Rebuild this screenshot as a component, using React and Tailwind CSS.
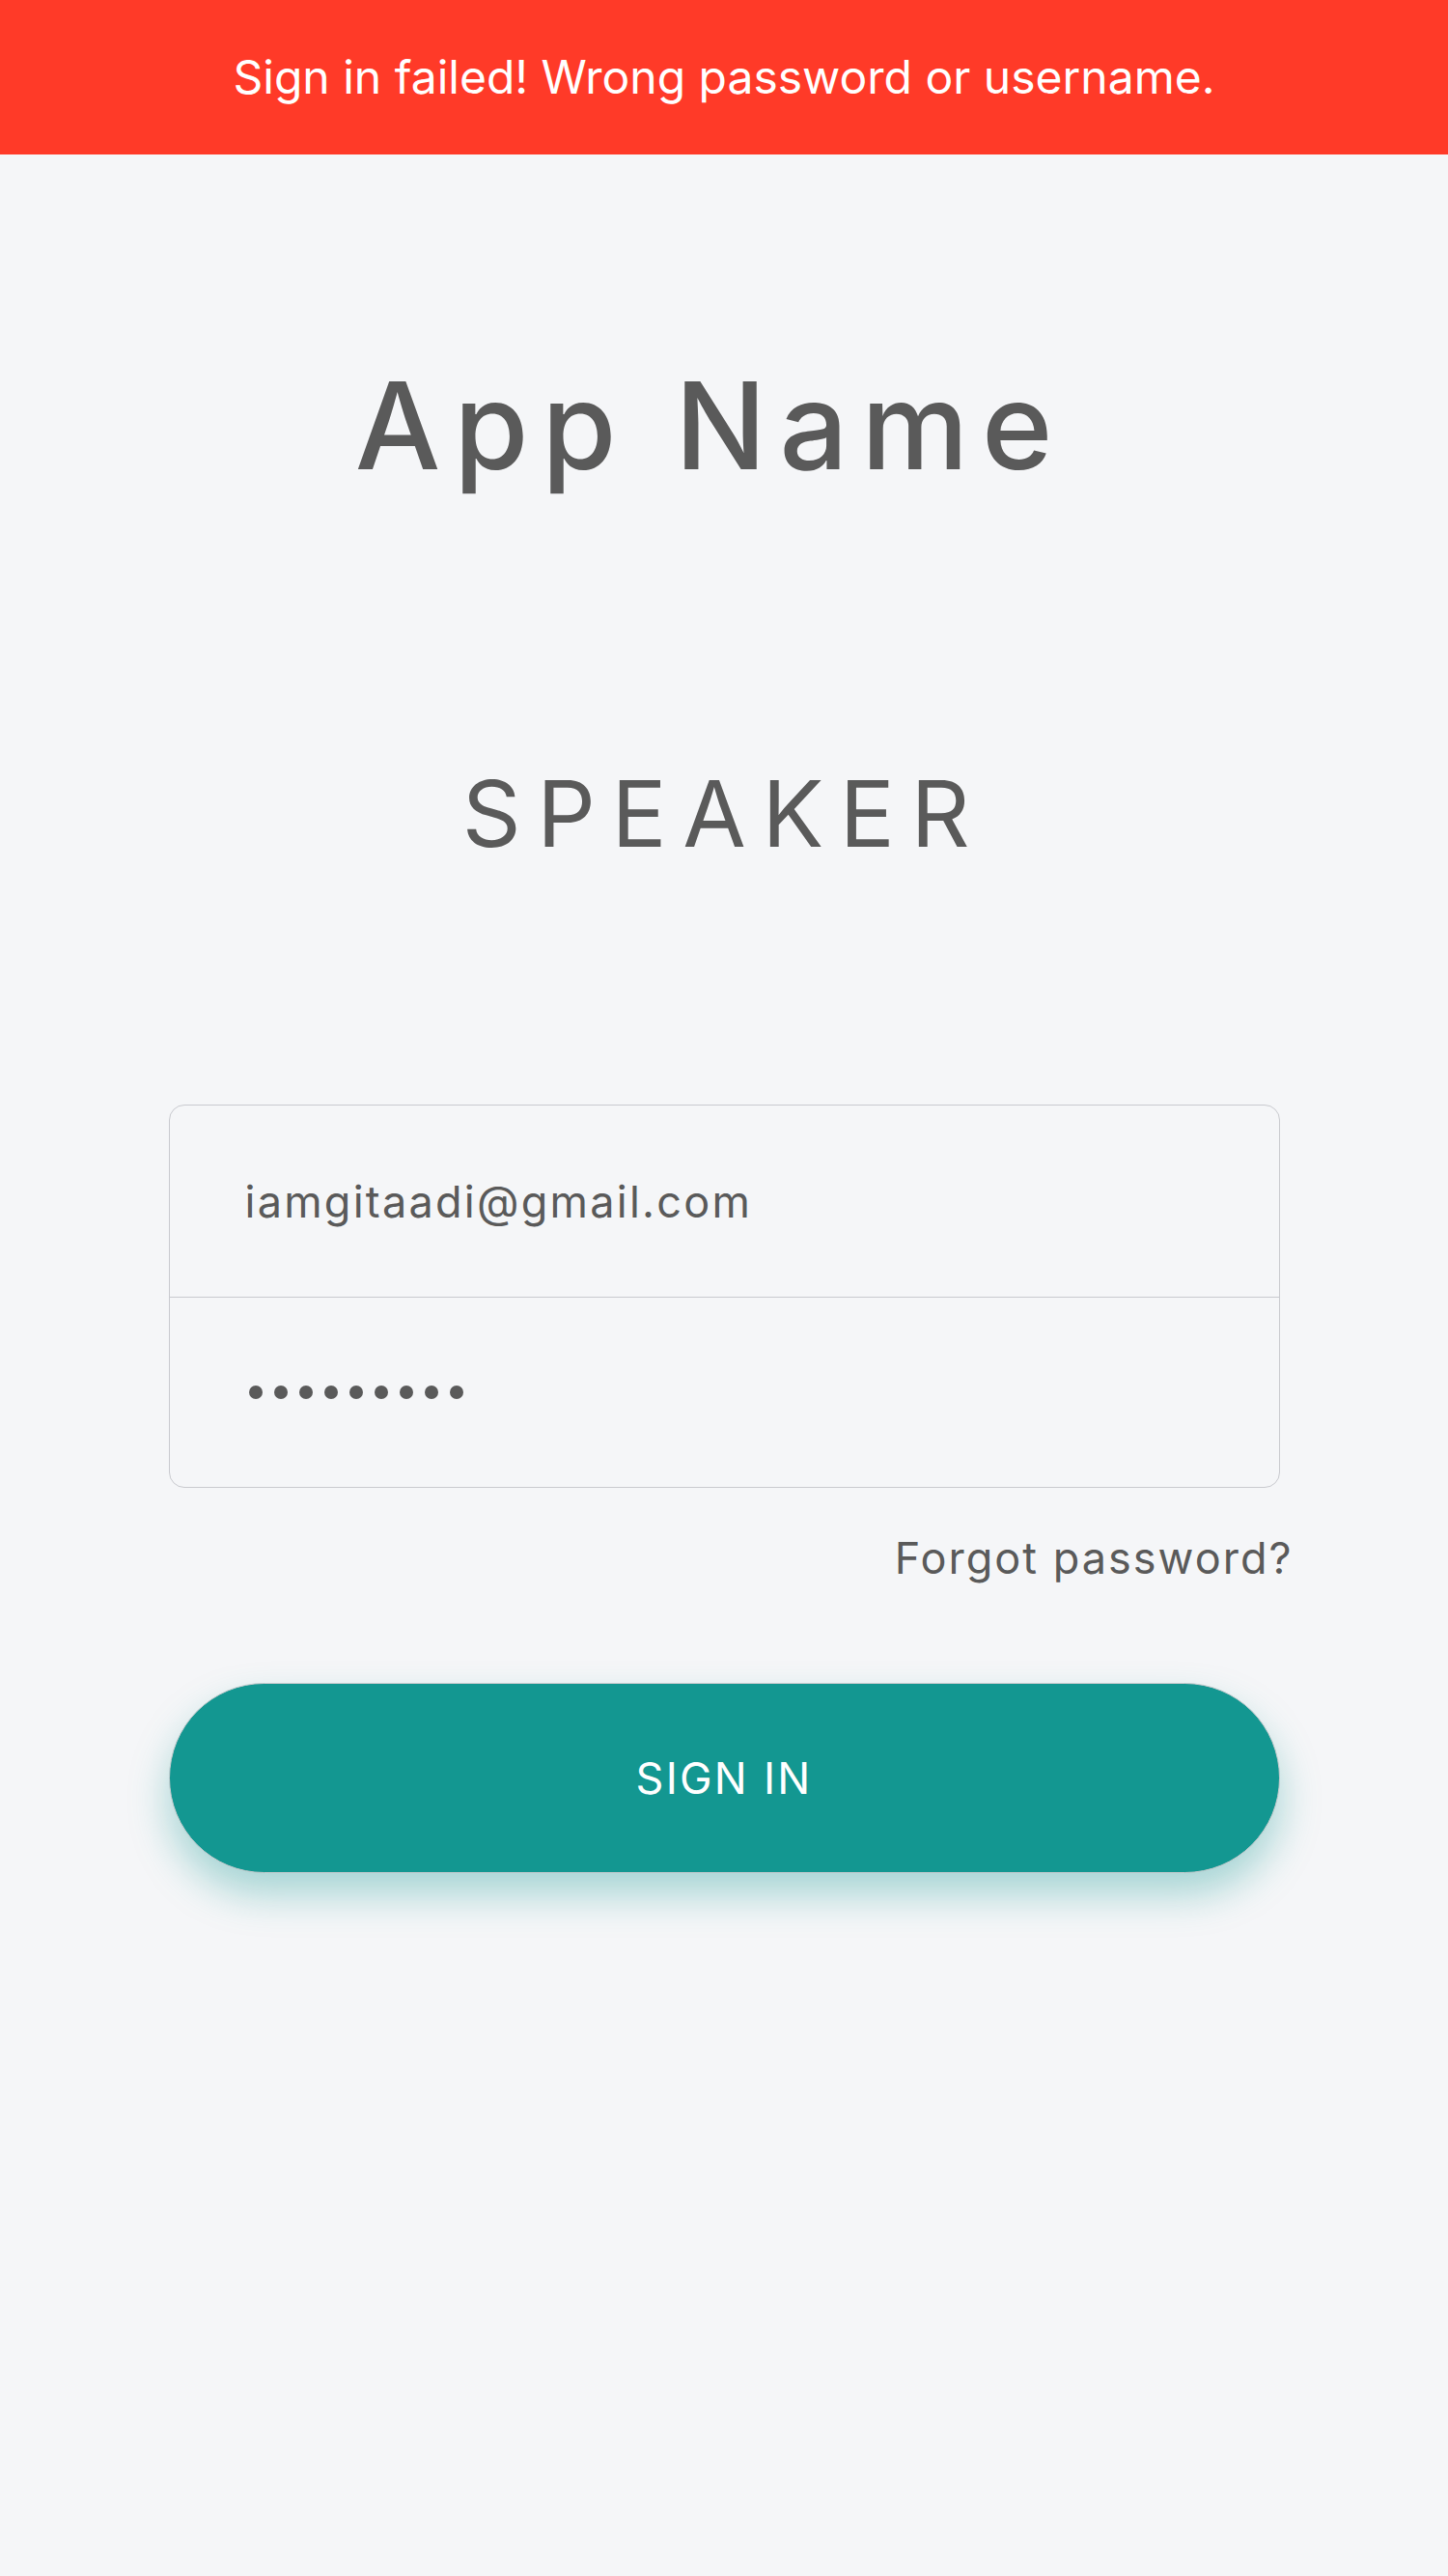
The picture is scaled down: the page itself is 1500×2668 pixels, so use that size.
export default function App() {
  return (
    <div className="min-h-[2668px] bg-[#f5f6f8] font-['Inter','Noto_Sans',sans-serif] text-[#5a5a5a]">
      <div className="h-[160px] bg-[#ff3a28] flex items-center justify-center">
        <p className="text-[48px] leading-none text-white">Sign in failed! Wrong password or username.</p>
      </div>

      <div className="flex flex-col items-center">
        <h1 className="mt-[218px] pr-[28px] text-[125px] leading-none font-medium tracking-[0.11em]">App Name</h1>
        <h2 className="mt-[292px] text-[95px] leading-none tracking-[0.175em]">SPEAKER</h2>
      </div>

      <div className="mx-auto mt-[254px] w-[1151px]">
        <div className="border border-[#c9cacf] rounded-[16px]">
          <div className="h-[199px] border-b border-[#c9cacf] flex items-center pl-[78px]">
            <span className="text-[45px] leading-none tracking-[0.05em]">iamgitaadi@gmail.com</span>
          </div>
          <div className="h-[196px] flex items-center gap-[12px] pl-[82px]">
            {Array.from({ length: 9 }).map((_, i) => (
              <span key={i} className="w-[14px] h-[14px] rounded-full bg-[#5a5a5a]" />
            ))}
          </div>
        </div>

        <div className="mt-[50px] -mr-[14px] flex justify-end">
          <a href="#" className="text-[45px] leading-none tracking-[0.045em]">Forgot password?</a>
        </div>

        <button className="mt-[107px] w-full h-[197px] rounded-full bg-[#139791] border border-[#c9cccf] shadow-[0_22px_40px_rgba(19,151,145,0.35)] text-white text-[45px] leading-none tracking-[0.05em]">
          SIGN IN
        </button>
      </div>
    </div>
  );
}
